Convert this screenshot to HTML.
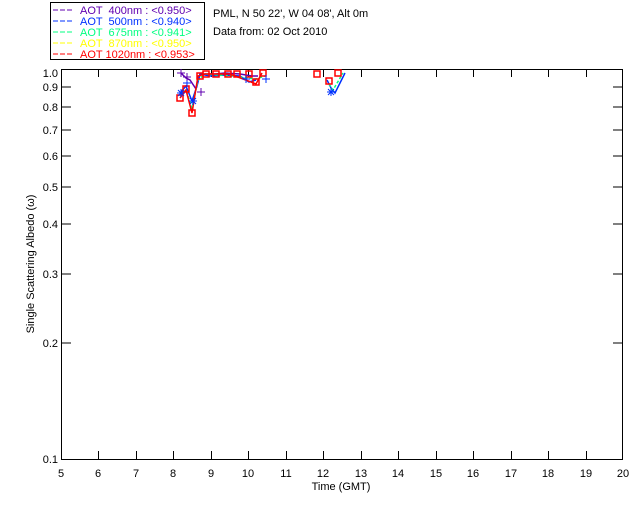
<!DOCTYPE html>
<html><head><meta charset="utf-8"><style>
html,body{margin:0;padding:0;background:#fff;}
svg{display:block;}
text{font-family:"Liberation Sans",sans-serif;font-size:11px;white-space:pre;}
</style></head><body>
<svg width="640" height="512" viewBox="0 0 640 512" xmlns="http://www.w3.org/2000/svg" xml:space="preserve">
<rect width="640" height="512" fill="#fff"/>
<rect x="50.5" y="2.5" width="154" height="57" fill="#fff" stroke="#000"/>
<g font-size="11">
<line x1="53" y1="10" x2="74" y2="10" stroke="#6000b0" stroke-dasharray="5,2"/>
<text x="80" y="14" fill="#6000b0">AOT  400nm : &lt;0.950&gt;</text>
<line x1="53" y1="21" x2="74" y2="21" stroke="#0030ff" stroke-dasharray="5,2"/>
<text x="80" y="25" fill="#0030ff">AOT  500nm : &lt;0.940&gt;</text>
<line x1="53" y1="32" x2="74" y2="32" stroke="#00ff80" stroke-dasharray="5,2"/>
<text x="80" y="36" fill="#00ff80">AOT  675nm : &lt;0.941&gt;</text>
<line x1="53" y1="43" x2="74" y2="43" stroke="#ffff00" stroke-dasharray="5,2"/>
<text x="80" y="47" fill="#ffff00">AOT  870nm : &lt;0.950&gt;</text>
<line x1="53" y1="54" x2="74" y2="54" stroke="#ff0000" stroke-dasharray="5,2"/>
<text x="80" y="58" fill="#ff0000">AOT 1020nm : &lt;0.953&gt;</text>
</g>
<text x="213" y="17" fill="#000">PML, N 50 22', W 04 08', Alt 0m</text>
<text x="213" y="35" fill="#000">Data from: 02 Oct 2010</text>
<rect x="61.5" y="69.5" width="561" height="390" fill="none" stroke="#000"/>
<g stroke="#000">
<path d="M61 87h10M61 107h10M61 130h10M61 156h10M61 187h10M61 224h10M61 274h10M61 343h10M623 87h-10M623 107h-10M623 130h-10M623 156h-10M623 187h-10M623 224h-10M623 274h-10M623 343h-10"/>
<path d="M98.5 459v-8M136.5 459v-8M173.5 459v-8M211.5 459v-8M248.5 459v-8M286.5 459v-8M323.5 459v-8M361.5 459v-8M398.5 459v-8M436.5 459v-8M473.5 459v-8M511.5 459v-8M548.5 459v-8M586.5 459v-8"/>
<path d="M98.5 69v8M136.5 69v8M173.5 69v8M211.5 69v8M248.5 69v8M286.5 69v8M323.5 69v8M361.5 69v8M398.5 69v8M436.5 69v8M473.5 69v8M511.5 69v8M548.5 69v8M586.5 69v8"/>
</g>
<g font-size="11" text-anchor="end">
<text x="58" y="77">1.0</text><text x="58" y="91">0.9</text><text x="58" y="111">0.8</text><text x="58" y="134">0.7</text><text x="58" y="160">0.6</text><text x="58" y="191">0.5</text><text x="58" y="228">0.4</text><text x="58" y="278">0.3</text><text x="58" y="347">0.2</text><text x="58" y="463">0.1</text>
</g>
<g font-size="11" text-anchor="middle">
<text x="61" y="477">5</text><text x="98" y="477">6</text><text x="136" y="477">7</text><text x="173" y="477">8</text><text x="211" y="477">9</text><text x="248" y="477">10</text><text x="286" y="477">11</text><text x="323" y="477">12</text><text x="361" y="477">13</text><text x="398" y="477">14</text><text x="436" y="477">15</text><text x="473" y="477">16</text><text x="511" y="477">17</text><text x="548" y="477">18</text><text x="586" y="477">19</text><text x="623" y="477">20</text>
<text x="341" y="490">Time (GMT)</text>
</g>
<text transform="translate(34,264) rotate(-90)" text-anchor="middle" font-size="11">Single Scattering Albedo (ω)</text>
<g fill="none" stroke-width="1.5">
<polyline stroke="#6000b0" points="181,73 186,78 190,80 196,89 200,74 205,74 215,74 225,73 240,74 252,76 258,76"/>
<polyline stroke="#0030ff" points="180,93 186,86 192,101 197,86 200,74 210,76 225,75 240,76 249,82 256,80"/>
<polyline stroke="#00ff80" stroke-dasharray="3,2" points="180,96 186,90 192,108 198,80 205,74 230,76 256,79 265,76"/>
<polyline stroke="#ff0000" points="180,98 186,90 192,113 198,76 205,74 230,74 256,84 262,73"/>
<polyline stroke="#0030ff" points="327,80 331,88 335,93 345,73"/>
<polyline stroke="#00ff80" stroke-dasharray="3,2" points="329,84 333,90 343,73"/>
</g>
<g fill="none" stroke="#ff0000" stroke-width="1.5">
<rect x="177" y="95" width="6" height="6"/><rect x="183" y="86" width="6" height="6"/><rect x="189" y="110" width="6" height="6"/>
<rect x="197" y="73" width="6" height="6"/><rect x="203" y="71" width="6" height="6"/><rect x="213" y="71" width="6" height="6"/>
<rect x="225" y="71" width="6" height="6"/><rect x="234" y="71" width="6" height="6"/><rect x="246" y="71" width="6" height="6"/>
<rect x="253" y="79" width="6" height="6"/><rect x="260" y="70" width="6" height="6"/>
<rect x="314" y="71" width="6" height="6"/><rect x="326" y="78" width="6" height="6"/><rect x="335" y="70" width="6" height="6"/>
</g>
<g stroke="#0030ff" stroke-width="1">
<path d="M177 93h8M181 89v8M178 90l6 6M184 90l-6 6M183 83h8M187 79v8M189 101h8M193 97v8M190 98l6 6M196 98l-6 6M327 92h8M331 88v8M328 89l6 6M334 89l-6 6M242 79h8M246 75v8M262 79h8M266 75v8"/>
</g>
<g stroke="#6000b0" stroke-width="1">
<path d="M177 73h8M181 69v8M197 92h8M201 88v8M183 77h8M187 73v8"/>
</g>
</svg>
</body></html>
